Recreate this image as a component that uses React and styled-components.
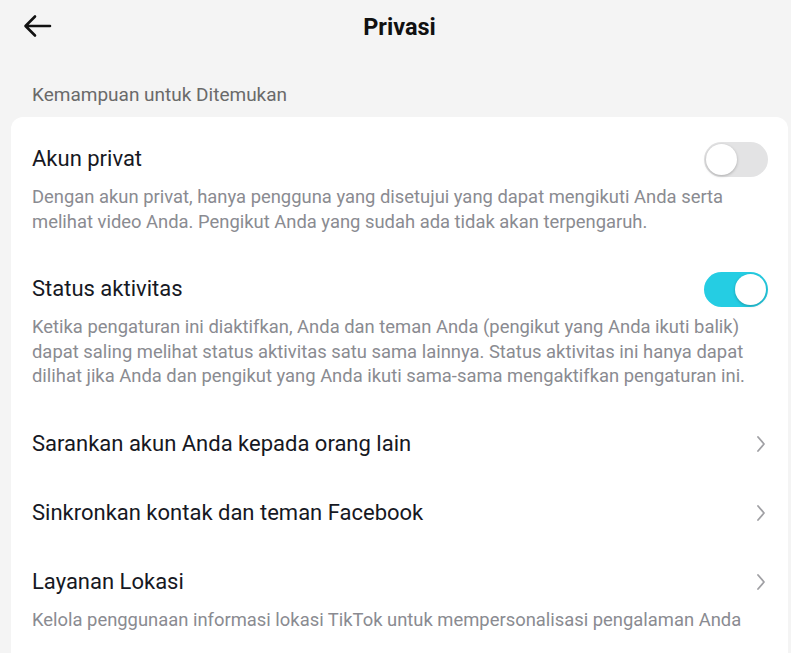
import React from "react";
import styled, { createGlobalStyle } from "styled-components";

const Global = createGlobalStyle`
  html, body { margin: 0; padding: 0; background: #f4f4f4; }
  body { font-family: Roboto, "Noto Sans", sans-serif; -webkit-font-smoothing: antialiased; }
  * { box-sizing: border-box; }
`;

const Page = styled.div`
  width: 791px;
  height: 653px;
  overflow: hidden;
  background: #f4f4f4;
  display: flex;
  flex-direction: column;
`;

const Header = styled.header`
  height: 54px;
  display: flex;
  align-items: center;
  justify-content: center;
  position: relative;
`;

const BackButton = styled.button`
  position: absolute;
  left: 20px;
  top: 10px;
  width: 34px;
  height: 32px;
  border: 0;
  background: none;
  padding: 0;
  display: flex;
  align-items: center;
  justify-content: center;
`;

const Title = styled.h1`
  margin: 0 0 0 8px;
  font-size: 23.5px;
  font-weight: 700;
  color: #111;
`;

const SectionLabel = styled.div`
  padding: 28px 0 0 32px;
  height: 63px;
  font-size: 19px;
  line-height: 26px;
  color: #6a6a6a;
`;

const Card = styled.section`
  margin: 0 3px 0 11px;
  background: #fff;
  border-radius: 12px 12px 0 0;
  flex: 1;
  padding: 28px 20px 0 21px;
  display: flex;
  flex-direction: column;
  gap: 41px;
`;

const Item = styled.div`
  display: flex;
  flex-direction: column;
  gap: 12px;
`;

const ItemHead = styled.div`
  display: flex;
  align-items: center;
  justify-content: space-between;
  height: 28px;
`;

const ItemTitle = styled.div`
  font-size: 22px;
  line-height: 28px;
  color: #161823;
`;

const Desc = styled.p`
  margin: 0;
  font-size: 18.4px;
  line-height: 24.5px;
  color: #8a8b91;
  padding-right: 4px;
`;

const Switch = styled.div`
  width: 64px;
  height: 35px;
  border-radius: 18px;
  background: ${(p) => (p.$on ? "#25cde3" : "#e3e3e4")};
  position: relative;
  flex-shrink: 0;
`;

const Knob = styled.div`
  position: absolute;
  top: 2px;
  left: ${(p) => (p.$on ? "31px" : "2px")};
  width: 31px;
  height: 31px;
  border-radius: 50%;
  background: #fff;
  box-shadow: 0 1px 3px rgba(0, 0, 0, 0.25);
`;

const Chevron = () => (
  <svg width="12" height="18" viewBox="0 0 12 18" style={{ marginRight: 1 }}>
    <path d="M3 2 L9 9 L3 16" fill="none" stroke="#a0a0a4" strokeWidth="1.8" strokeLinecap="round" strokeLinejoin="round" />
  </svg>
);

const items = [
  {
    title: "Akun privat",
    toggle: false,
    desc: "Dengan akun privat, hanya pengguna yang disetujui yang dapat mengikuti Anda serta melihat video Anda. Pengikut Anda yang sudah ada tidak akan terpengaruh.",
  },
  {
    title: "Status aktivitas",
    toggle: true,
    desc: "Ketika pengaturan ini diaktifkan, Anda dan teman Anda (pengikut yang Anda ikuti balik) dapat saling melihat status aktivitas satu sama lainnya. Status aktivitas ini hanya dapat dilihat jika Anda dan pengikut yang Anda ikuti sama-sama mengaktifkan pengaturan ini.",
  },
  { title: "Sarankan akun Anda kepada orang lain", chevron: true },
  { title: "Sinkronkan kontak dan teman Facebook", chevron: true },
  {
    title: "Layanan Lokasi",
    chevron: true,
    desc: "Kelola penggunaan informasi lokasi TikTok untuk mempersonalisasi pengalaman Anda",
  },
];

export default function App() {
  return (
    <Page>
      <Global />
      <Header>
        <BackButton aria-label="Kembali">
          <svg width="30" height="24" viewBox="0 0 30 24">
            <path d="M28 12 H4 M13 2.5 L3.5 12 L13 21.5" fill="none" stroke="#111" strokeWidth="2.6" strokeLinecap="round" strokeLinejoin="round" />
          </svg>
        </BackButton>
        <Title>Privasi</Title>
      </Header>
      <SectionLabel>Kemampuan untuk Ditemukan</SectionLabel>
      <Card>
        {items.map((it) => (
          <Item key={it.title}>
            <ItemHead>
              <ItemTitle>{it.title}</ItemTitle>
              {it.chevron ? (
                <Chevron />
              ) : (
                <Switch $on={it.toggle}>
                  <Knob $on={it.toggle} />
                </Switch>
              )}
            </ItemHead>
            {it.desc && <Desc>{it.desc}</Desc>}
          </Item>
        ))}
      </Card>
    </Page>
  );
}
